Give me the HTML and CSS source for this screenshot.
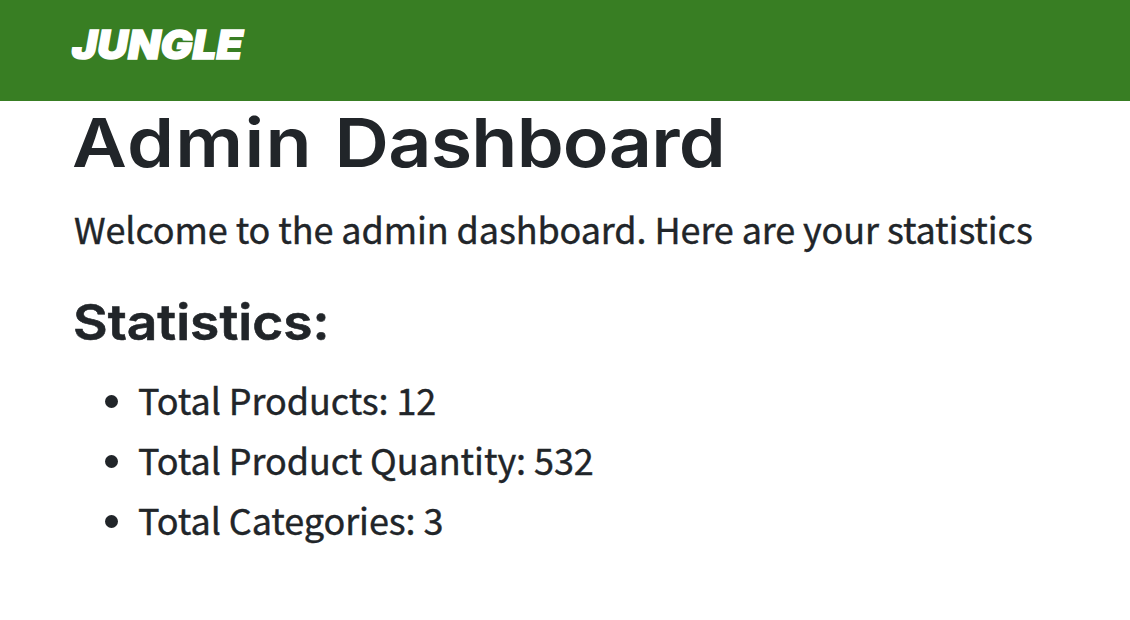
FILE: index.html
```html
<!DOCTYPE html>
<html lang="en">
<head>
<meta charset="utf-8">
<title>Jungle</title>
<link rel="stylesheet" href="styles.css">
</head>
<body>
<header class="navbar"><a class="brand">JUNGLE</a></header>
<main class="content">
<h1 class="title"><span class="title-wide">Admin</span> Dashboard</h1>
<p class="lead">Welcome to the admin dashboard. Here are your statistics</p>
<h2 class="subtitle">Statistics:</h2>
<ul class="stats">
<li class="stat">Total Products: 12</li>
<li class="stat">Total Product Quantity: 532</li>
<li class="stat">Total Categories: 3</li>
</ul>
</main>
</body>
</html>
```

FILE: styles.css
```css
* { box-sizing: border-box; }
body { margin: 0; background: #fff; color: #212529; font-family: "Noto Sans CJK SC", "Noto Sans", sans-serif; font-size: 36px; }
.navbar { height: 101px; padding: 20px 72px 0; background: #387e23; }
.brand { display: block; width: max-content; color: #fff; font: italic 900 40px/50px Inter, sans-serif; transform: scaleX(1.06); transform-origin: left; -webkit-text-stroke: 1.4px #fff; }
.content { padding: 0 74px; }
.title, .subtitle { margin: 0; width: max-content; font-family: Inter, "Open Sans", sans-serif; white-space: nowrap; transform-origin: left; }
.title { margin-left: -2px; font-size: 68px; line-height: 82px; font-weight: 600; letter-spacing: -.7px; word-spacing: 3px; transform: scaleX(1.108); }
.title-wide { letter-spacing: 1.2px; }
.lead { margin: 15px 0 0; line-height: 60px; white-space: nowrap; width: max-content; letter-spacing: -.1px; -webkit-text-stroke: .4px #212529; }
.subtitle { margin: 33px 0 0 -1px; font-size: 50px; line-height: 62px; font-weight: 600; transform: scaleX(1.066); -webkit-text-stroke: .6px #212529; }
.stats { margin: 16px 0 0; padding: 0 0 0 64px; list-style: disc; }
.stat { line-height: 60px; letter-spacing: -.08px; -webkit-text-stroke: .4px #212529; }
.stat::marker { font-size: 34px; }
```
